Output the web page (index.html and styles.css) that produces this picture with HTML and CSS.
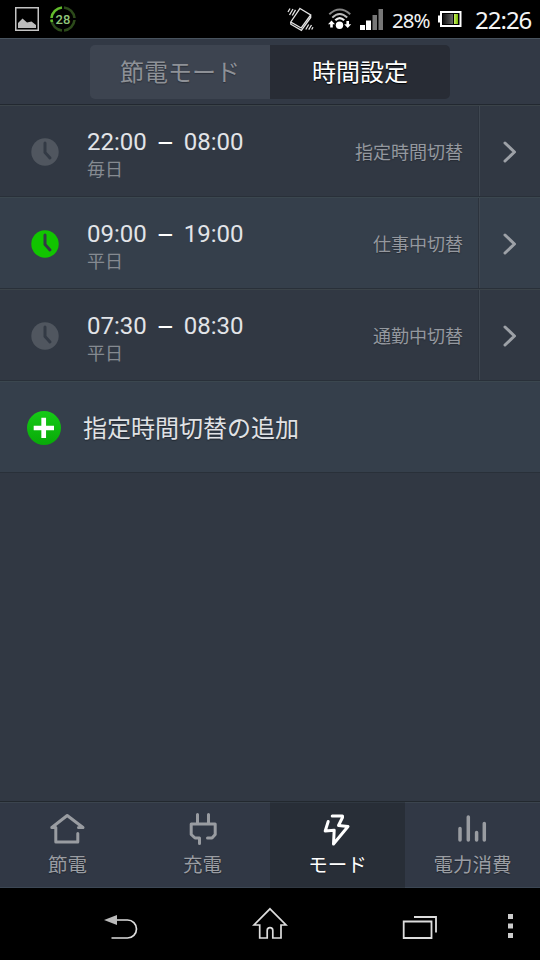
FILE: index.html
```html
<!DOCTYPE html>
<html lang="ja">
<head>
<meta charset="utf-8">
<title>時間設定</title>
<link rel="stylesheet" href="styles.css">
</head>
<body>
<div class="screen">
  <header class="status">
    <svg class="s-picture" width="24" height="24" viewBox="0 0 24 24"><rect x=".75" y=".75" width="22.5" height="22.5" fill="none" stroke="#c4c4c4" stroke-width="1.5"/><path d="M3 21V16L7.5 11.5L12 15.5L16.5 14.5L21 18V21Z" fill="#bcbcbc"/></svg>
    <div class="s-ring">
      <svg width="28" height="28" viewBox="0 0 28 28" fill="none" stroke-width="2.6"><path d="M15 2.5A11.6 11.6 0 0 1 25.5 13M25.5 15A11.6 11.6 0 0 1 15 25.5M13 25.5A11.6 11.6 0 0 1 2.5 15" stroke="#2c4a1a"/><path d="M2.5 13A11.6 11.6 0 0 1 13 2.5M2.4 14.5L3 17" stroke="#62bd2c"/></svg>
      <span>28</span>
    </div>
    <svg class="s-vibrate" width="28" height="26" viewBox="0 0 28 26" fill="none" stroke="#e4e4e4" stroke-width="1.3"><path d="M13 2.500L23.700 9L14.200 22L3.800 16ZM3.800 16V18.200L14.400 24.300L23.700 11.500V9"/><path d="M1 6L3 2.500M2.500 9L6 3M5.300 9.500L8.500 3.900M18.800 23.500L21.700 18.500M21.700 23.700L24.500 19M24.700 23.500L26 21.200"/></svg>
    <svg class="s-wifi" width="24" height="22" viewBox="0 0 24 22"><path d="M1.3 6.3Q11.7-3.3 22.2 6.3" fill="none" stroke="#858585" stroke-width="2"/><path d="M4.3 9.6Q11.7 2.5 19.2 9.6" fill="none" stroke="#bcbcbc" stroke-width="2"/><path d="M7.3 12.3Q11.7 7.8 16.2 12.3" fill="none" stroke="#eee" stroke-width="2.2"/><circle cx="11.5" cy="17.2" r="3.7" fill="#fff"/><path d="M3.500 12.500L0 16.300H2.200V19.500H4.800V16.300H7ZM19.700 20L16.200 16.200H18.400V13H21V16.200H23.200Z" fill="#fff"/></svg>
    <svg class="s-signal" width="24" height="21" viewBox="0 0 24 21"><path d="M0 16h5v5H0zM6 11.5h5V21H6z" fill="#fff"/><path d="M12.5 6H17v15h-4.500zM18.500 0H23v21h-4.500z" fill="#777"/></svg>
    <span class="s-percent">28%</span>
    <svg class="s-battery" width="24" height="16" viewBox="0 0 24 16"><defs><linearGradient id="cell"><stop stop-color="#111"/><stop offset="1" stop-color="#666"/></linearGradient><linearGradient id="charge"><stop stop-color="#c8ef65"/><stop offset="1" stop-color="#78b900"/></linearGradient></defs><rect x="3" y="1" width="19.500" height="14" fill="#000" stroke="#fff" stroke-width="2"/><path d="M0 4.500h3v7H0z" fill="#fff"/><path d="M5 3h10v10H5z" fill="url(#cell)"/><path d="M16 3h4v10h-4z" fill="url(#charge)"/></svg>
    <span class="s-clock">22:26</span>
  </header>

  <nav class="top">
    <div class="segments">
      <div class="segment">節電モード</div>
      <div class="segment segment-on">時間設定</div>
    </div>
  </nav>

  <main class="list">
    <section class="row">
      <svg class="clock" width="28" height="28" viewBox="0 0 28 28"><circle cx="14" cy="14" r="13.700"/><path d="M14 5V14.500L19 20"/></svg>
      <div class="info"><div class="time">22:00<span class="dash">—</span>08:00</div><div class="day">毎日</div></div>
      <div class="kind">指定時間切替</div>
      <div class="more"><svg width="14" height="22" viewBox="0 0 14 22"><path d="M2 2L11.500 11L2 20"/></svg></div>
    </section>
    <section class="row row-active">
      <svg class="clock" width="28" height="28" viewBox="0 0 28 28"><circle cx="14" cy="14" r="13.700"/><path d="M14 5V14.500L19 20"/></svg>
      <div class="info"><div class="time">09:00<span class="dash">—</span>19:00</div><div class="day">平日</div></div>
      <div class="kind">仕事中切替</div>
      <div class="more"><svg width="14" height="22" viewBox="0 0 14 22"><path d="M2 2L11.500 11L2 20"/></svg></div>
    </section>
    <section class="row">
      <svg class="clock" width="28" height="28" viewBox="0 0 28 28"><circle cx="14" cy="14" r="13.700"/><path d="M14 5V14.500L19 20"/></svg>
      <div class="info"><div class="time">07:30<span class="dash">—</span>08:30</div><div class="day">平日</div></div>
      <div class="kind">通勤中切替</div>
      <div class="more"><svg width="14" height="22" viewBox="0 0 14 22"><path d="M2 2L11.500 11L2 20"/></svg></div>
    </section>
    <section class="row row-active row-add">
      <svg class="plus" width="34" height="34" viewBox="0 0 34 34"><defs><linearGradient id="green" x2="0" y2="1"><stop stop-color="#16cb16"/><stop offset="1" stop-color="#08a908"/></linearGradient></defs><circle cx="17" cy="17" r="17" fill="url(#green)"/><path d="M16.700 6.700V27M6.700 17H27" stroke="#fff" stroke-width="4.700"/></svg>
      <div class="add">指定時間切替の追加</div>
    </section>
  </main>

  <nav class="tabs">
    <div class="tab"><svg width="36" height="34" viewBox="0 0 36 34"><path d="M27.800 20.500V29H5.800V14.500H1.800L17.200 2.500L33 14.500H28.500"/></svg><span>節電</span></div>
    <div class="tab"><svg width="36" height="34" viewBox="0 0 36 34"><path d="M12.500 1.500V10M23.500 1.500V10M14.500 30.500V25H10L6.200 21.500V11H30.200V21.500L27 25H22.500"/></svg><span>充電</span></div>
    <div class="tab tab-on"><svg width="36" height="34" viewBox="0 0 36 34"><path d="M8.200 8.500L5.200 18L14.200 17.200L13.500 31L28 13.500L18.500 12.500L22.500 4.500V3H12.200"/></svg><span>モード</span></div>
    <div class="tab"><svg class="bars" width="36" height="34" viewBox="0 0 36 34"><path d="M5 15.500V27M13.300 4V27M21.600 19.500V27M29.300 10.500V27"/></svg><span>電力消費</span></div>
  </nav>

  <footer class="system">
    <svg width="36" height="32" viewBox="0 0 36 32"><path d="M13 11H24.500A8.900 8.900 0 0 1 24.500 29H8.500" fill="none" stroke="#ddd" stroke-width="1.700"/><path d="M1 11L14 6V16Z" fill="#bbb"/></svg>
    <svg class="n-home" width="36" height="34" viewBox="0 0 36 34" fill="none" stroke="#ddd" stroke-width="1.700"><path d="M18 1.800L34 18H29V31H20.800V23.500A2.800 2.800 0 0 0 15.200 23.500V31H7.700V18H2Z"/></svg>
    <svg class="n-recent" width="36" height="26" viewBox="0 0 36 26" fill="none" stroke="#ddd" stroke-width="1.800"><path d="M1.700 7.500H29.500V24H1.700ZM12 3H34V18.500"/></svg>
    <svg class="n-menu" width="5" height="25" viewBox="0 0 5 25"><path d="M0 0h5v5H0zM0 9.500h5v5H0zM0 19h5v5H0z" fill="#ccc"/></svg>
  </footer>
</div>
</body>
</html>
```
FILE: styles.css
```css
* { box-sizing: border-box; }
body { margin: 0; background: #000; }
svg { display: block; flex: none; }
.screen {
  width: 540px; height: 960px; display: flex; flex-direction: column;
  overflow: hidden; background: #313843; color: #dfe1e4;
  font-family: Roboto, "Noto Sans CJK JP", sans-serif; white-space: nowrap;
}

.status { height: 38px; flex: none; display: flex; align-items: center; background: #000; padding-left: 15px; }
.s-ring { width: 28px; height: 28px; margin-left: 10px; display: grid; place-items: center; }
.s-ring > * { grid-area: 1 / 1; }
.s-ring span { font-size: 13px; font-weight: 500; color: #91c77a; }
.s-vibrate { margin-left: 210px; }
.s-wifi { margin-left: 13px; }
.s-signal { margin-left: 8px; }
.s-percent { width: 46px; margin-left: 8px; padding-top: 1px; font: 20.500px/28px "Noto Sans", sans-serif; letter-spacing: -1px; color: #f2f2f2; }
.s-clock { margin-left: 13px; padding-top: 1px; font: 24px/32px "Noto Sans", sans-serif; letter-spacing: -1px; color: #f4f4f4; }

.top { height: 67px; flex: none; display: flex; justify-content: center; padding-top: 7px; background: #323945; border-top: 1px solid #48535e; border-bottom: 1px solid #222830; }
.segments { width: 360px; height: 54px; display: flex; margin-top: -1px; border-radius: 5px; overflow: hidden; }
.segment { flex: 1; padding-top: 2px; text-align: center; font-size: 24px; line-height: 53px; background: #3d4450; color: #8e9197; text-shadow: 0 1px 1px #2b3039; }
.segment-on { background: #282c35; color: #fff; text-shadow: 0 1px 1px #000; }

.list { flex: 1; }
.row { height: 92px; display: flex; align-items: center; padding-left: 31px; background: #313843; border-top: 1px solid #3b4349; border-bottom: 1px solid #293039; }
.row-active { background: #353f4b; border-top-color: #3b474f; }
.clock { margin-top: 2px; }
.clock circle { fill: #50565f; }
.clock path { fill: none; stroke: #333a45; stroke-width: 3; stroke-linecap: round; }
.row-active .clock circle { fill: #11c500; }
.info { margin-left: 28px; flex: 1; padding-top: 7px; }
.time { font-size: 24px; line-height: 28px; color: #e2e4e8; }
.dash { display: inline-block; width: 37px; text-align: center; font-size: 20px; font-weight: 500; color: #fff; }
.day { font-size: 18px; line-height: 25px; color: #858a91; }
.kind { padding-top: 4px; font-size: 18px; line-height: 26px; color: #94989f; text-shadow: 0 1px 1px #272c34; margin-right: 16px; }
.more { width: 61px; height: 90px; display: flex; align-items: center; border-left: 1px solid #3f4751; box-shadow: -1px 0 #2c333d; padding: 2px 0 0 23px; }
.more path { fill: none; stroke: #9da1a7; stroke-width: 3; stroke-linecap: round; stroke-linejoin: round; }
.row-add { padding-left: 27px; }
.plus { margin-top: 2px; }
.add { margin-left: 22px; padding-top: 3px; font-size: 24px; line-height: 34px; color: #e0e2e5; text-shadow: 0 1px 1px #20262e; }

.tabs { height: 87px; flex: none; display: flex; border-top: 1px solid #22282e; background: #313845; }
.tab { flex: 1; display: flex; flex-direction: column; align-items: center; padding-top: 10px; border-top: 1px solid #3b444e; border-bottom: 1px solid #3c4754; color: #9a9da3; font-size: 19.500px; line-height: 29px; text-shadow: 0 1px 1px #20252d; }
.tab svg { fill: none; stroke: #999ca1; stroke-width: 3; stroke-linecap: round; stroke-linejoin: round; }
.tab .bars { stroke-width: 3.500; }
.tab span { margin-top: 4px; }
.tab-on { background: #282e37; color: #fff; border-color: #303841; }
.tab-on svg { stroke: #fff; }

.system { height: 72px; flex: none; background: #000; display: flex; align-items: flex-start; padding: 21px 0 0 103px; }
.n-home { margin: -2px 0 0 113px; }
.n-recent { margin: 5px 0 0 114px; }
.n-menu { margin: 5px 0 0 70px; }
```
